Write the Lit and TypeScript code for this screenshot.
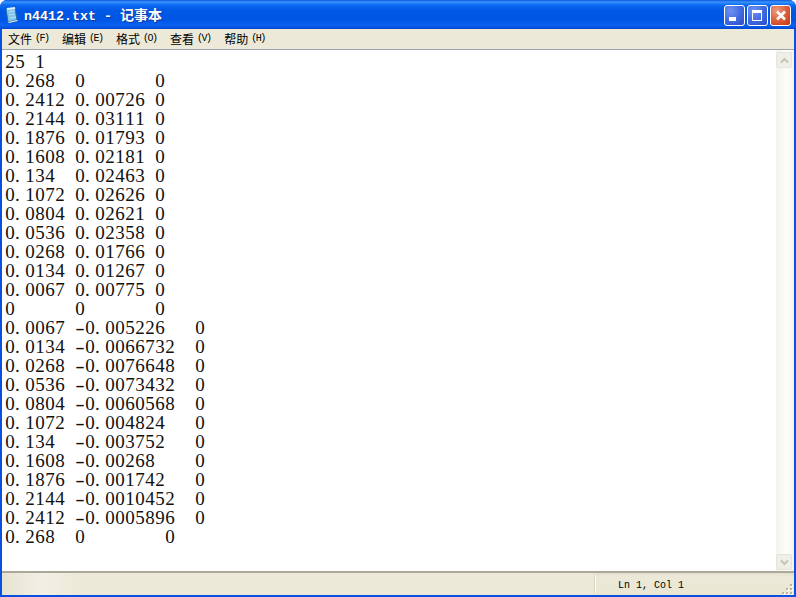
import { LitElement, html, css, svg } from "lit";
import { customElement } from "lit/decorators.js";

const TEXT = `25 1
0.268  0       0
0.2412 0.00726 0
0.2144 0.03111 0
0.1876 0.01793 0
0.1608 0.02181 0
0.134  0.02463 0
0.1072 0.02626 0
0.0804 0.02621 0
0.0536 0.02358 0
0.0268 0.01766 0
0.0134 0.01267 0
0.0067 0.00775 0
0      0       0
0.0067 -0.005226   0
0.0134 -0.0066732  0
0.0268 -0.0076648  0
0.0536 -0.0073432  0
0.0804 -0.0060568  0
0.1072 -0.004824   0
0.134  -0.003752   0
0.1608 -0.00268    0
0.1876 -0.001742   0
0.2144 -0.0010452  0
0.2412 -0.0005896  0
0.268  0        0`;

const MENUS = [
  ["文件", "(F)"],
  ["编辑", "(E)"],
  ["格式", "(O)"],
  ["查看", "(V)"],
  ["帮助", "(H)"],
];

const appIcon = svg`<svg width="16" height="17" viewBox="0 0 16 17">
  <path d="M2 2 L11 1 L13 13 L4 15 Z" fill="#7fc4ea" stroke="#2b6f9e" stroke-width="1"/>
  <path d="M3 2 L11 1" stroke="#dff2fb" stroke-width="2"/>
  <path d="M5 5 L11 4 M5 8 L11 7 M6 11 L12 10" stroke="#b5e2f5" stroke-width="1"/>
  <path d="M4 15 L13 13 L14 14 L5 16 Z" fill="#e8e6d8"/>
</svg>`;

const grip = svg`<svg width="12" height="12" viewBox="0 0 12 12">
  <g fill="#fff"><rect x="9" y="1" width="2" height="2"/><rect x="5" y="5" width="2" height="2"/><rect x="9" y="5" width="2" height="2"/><rect x="1" y="9" width="2" height="2"/><rect x="5" y="9" width="2" height="2"/><rect x="9" y="9" width="2" height="2"/></g>
  <g fill="#b8b59f"><rect x="8" y="0" width="2" height="2"/><rect x="4" y="4" width="2" height="2"/><rect x="8" y="4" width="2" height="2"/><rect x="0" y="8" width="2" height="2"/><rect x="4" y="8" width="2" height="2"/><rect x="8" y="8" width="2" height="2"/></g>
</svg>`;

function cellClass(ch: string) {
  if (ch === ".") return "c dot";
  if (ch === "-") return "c minus";
  return "c";
}

@customElement("app-root")
export class AppRoot extends LitElement {
  static styles = css`
    :host {
      display: block;
      width: 796px;
      height: 597px;
      overflow: hidden;
    }
    .window {
      height: 597px;
      box-sizing: border-box;
      display: flex;
      flex-direction: column;
      background: #0a50e0;
      border-radius: 7px 7px 0 0;
      overflow: hidden;
    }
    .titlebar {
      flex: 0 0 29px;
      display: flex;
      align-items: center;
      padding: 0 5px 0 4px;
      gap: 4px;
      background: linear-gradient(
        180deg,
        #0a58d8 0,
        #3a93ff 2px,
        #0a6af0 5px,
        #0058e6 10px,
        #0055e5 20px,
        #0a62f2 25px,
        #0048d0 29px
      );
    }
    .app-icon {
      width: 16px;
      height: 17px;
      display: block;
      margin-top: 2px;
    }
    .title {
      flex: 1;
      font: bold 13.33px/16px "Liberation Mono", "Noto Sans CJK SC", monospace;
      color: #fff;
      text-shadow: 1px 1px 0 #0f3a9e;
      white-space: pre;
      margin-top: 2px;
    }
    .title .cjk {
      font: bold 14px/16px "Noto Sans CJK SC", sans-serif;
    }
    .btns {
      display: flex;
      gap: 2px;
      margin-top: 2px;
    }
    .btn {
      width: 19px;
      height: 19px;
      border: 1px solid #fff;
      border-radius: 3px;
      display: flex;
      align-items: center;
      justify-content: center;
      background: radial-gradient(circle at 30% 25%, #6f93f2 0, #3f68df 55%, #2a4cc4 100%);
    }
    .btn.close {
      background: radial-gradient(circle at 30% 25%, #ee9a7e 0, #dd5f3c 50%, #bf3412 100%);
    }
    .btn svg {
      display: block;
    }
    .body {
      flex: 1;
      min-height: 0;
      margin: 0 2px 2px 2px;
      display: flex;
      flex-direction: column;
      background: #ece9d8;
    }
    .menubar {
      flex: 0 0 20px;
      display: flex;
      align-items: center;
      padding-left: 6px;
      gap: 13.5px;
      background: #ece9d8;
      border-bottom: 1px solid #9aa5b0;
      font: 12px/14px "Noto Sans CJK SC", sans-serif;
      color: #000;
    }
    .menu {
      display: flex;
      align-items: center;
      gap: 3px;
      white-space: pre;
    }
    .key {
      font: 10px/14px "Liberation Mono", monospace;
      letter-spacing: -1.5px;
    }
    .content {
      flex: 1;
      min-height: 0;
      display: flex;
      background: #fff;
    }
    .text {
      flex: 1;
      padding: 2px 0 0 3px;
      overflow: hidden;
      font: 19px/19px "Liberation Serif", serif;
      color: #111;
    }
    .line {
      height: 19px;
      white-space: pre;
    }
    .c {
      display: inline-block;
      width: 10px;
      text-align: center;
    }
    .c.dot {
      text-align: left;
    }
    .c.minus {
      transform: scaleX(1.5);
    }
    .scroll {
      flex: 0 0 18px;
      display: flex;
      flex-direction: column;
      justify-content: space-between;
      padding: 2px 0 1px;
      background: linear-gradient(90deg, #f3f2ec, #fdfdfa 60%, #f4f3ee);
    }
    .arrow {
      width: 16px;
      height: 16px;
      box-sizing: border-box;
      border: 1px solid #e6e4da;
      border-radius: 2px;
      background: #efeee7;
      display: flex;
      align-items: center;
      justify-content: center;
    }
    .rule {
      flex: 0 0 2px;
      background: #aca899;
    }
    .status {
      flex: 0 0 22px;
      display: flex;
      align-items: center;
      background: linear-gradient(180deg, #e3e0cf, #ece9d8 4px, #e9e6d4 100%);
    }
    .status .left {
      flex: 0 0 592px;
      background: linear-gradient(90deg, #e6e3d2, #f2f0e6 40px, #ece9d8 80px);
      height: 100%;
    }
    .status .sep {
      flex: 0 0 2px;
      height: 18px;
      background: linear-gradient(90deg, #d6d3c2 50%, #fff 50%);
    }
    .status .pos {
      flex: 1;
      padding: 3px 0 0 22px;
      font: 10px/14px "Liberation Mono", monospace;
      color: #000;
      white-space: pre;
    }
    .status .grip {
      flex: 0 0 12px;
      align-self: flex-end;
      height: 12px;
      margin-bottom: 1px;
    }
  `;

  render() {
    return html`
      <div class="window">
        <div class="titlebar">
          <span class="app-icon">${appIcon}</span>
          <span class="title">n4412.txt - <span class="cjk">记事本</span></span>
          <div class="btns">
            <div class="btn">
              <svg width="13" height="13" viewBox="0 0 13 13"><rect x="1" y="8" width="7" height="4" fill="#fff"/></svg>
            </div>
            <div class="btn">
              <svg width="13" height="13" viewBox="0 0 13 13"><path d="M1 1h10v11H1z M2 4v7h8V4z" fill="#fff" fill-rule="evenodd"/></svg>
            </div>
            <div class="btn close">
              <svg width="13" height="13" viewBox="0 0 13 13"><path d="M3 2.5 L11 10.5 M11 2.5 L3 10.5" stroke="#fff" stroke-width="2.6"/></svg>
            </div>
          </div>
        </div>
        <div class="body">
          <div class="menubar">
            ${MENUS.map(([c, k]) => html`<span class="menu">${c}<span class="key">${k}</span></span>`)}
          </div>
          <div class="content">
            <div class="text">
              ${TEXT.split("\n").map(
                (l) => html`<div class="line">${l.split("").map((ch) => html`<span class=${cellClass(ch)}>${ch}</span>`)}</div>`
              )}
            </div>
            <div class="scroll">
              <div class="arrow">
                <svg width="9" height="7" viewBox="0 0 9 7"><path d="M1 5.5 L4.5 2 L8 5.5" fill="none" stroke="#c6c5b8" stroke-width="2"/></svg>
              </div>
              <div class="arrow">
                <svg width="9" height="7" viewBox="0 0 9 7"><path d="M1 1.5 L4.5 5 L8 1.5" fill="none" stroke="#c6c5b8" stroke-width="2"/></svg>
              </div>
            </div>
          </div>
          <div class="rule"></div>
          <div class="status">
            <div class="left"></div>
            <div class="sep"></div>
            <div class="pos">Ln 1, Col 1</div>
            <div class="grip">${grip}</div>
          </div>
        </div>
      </div>
    `;
  }
}
